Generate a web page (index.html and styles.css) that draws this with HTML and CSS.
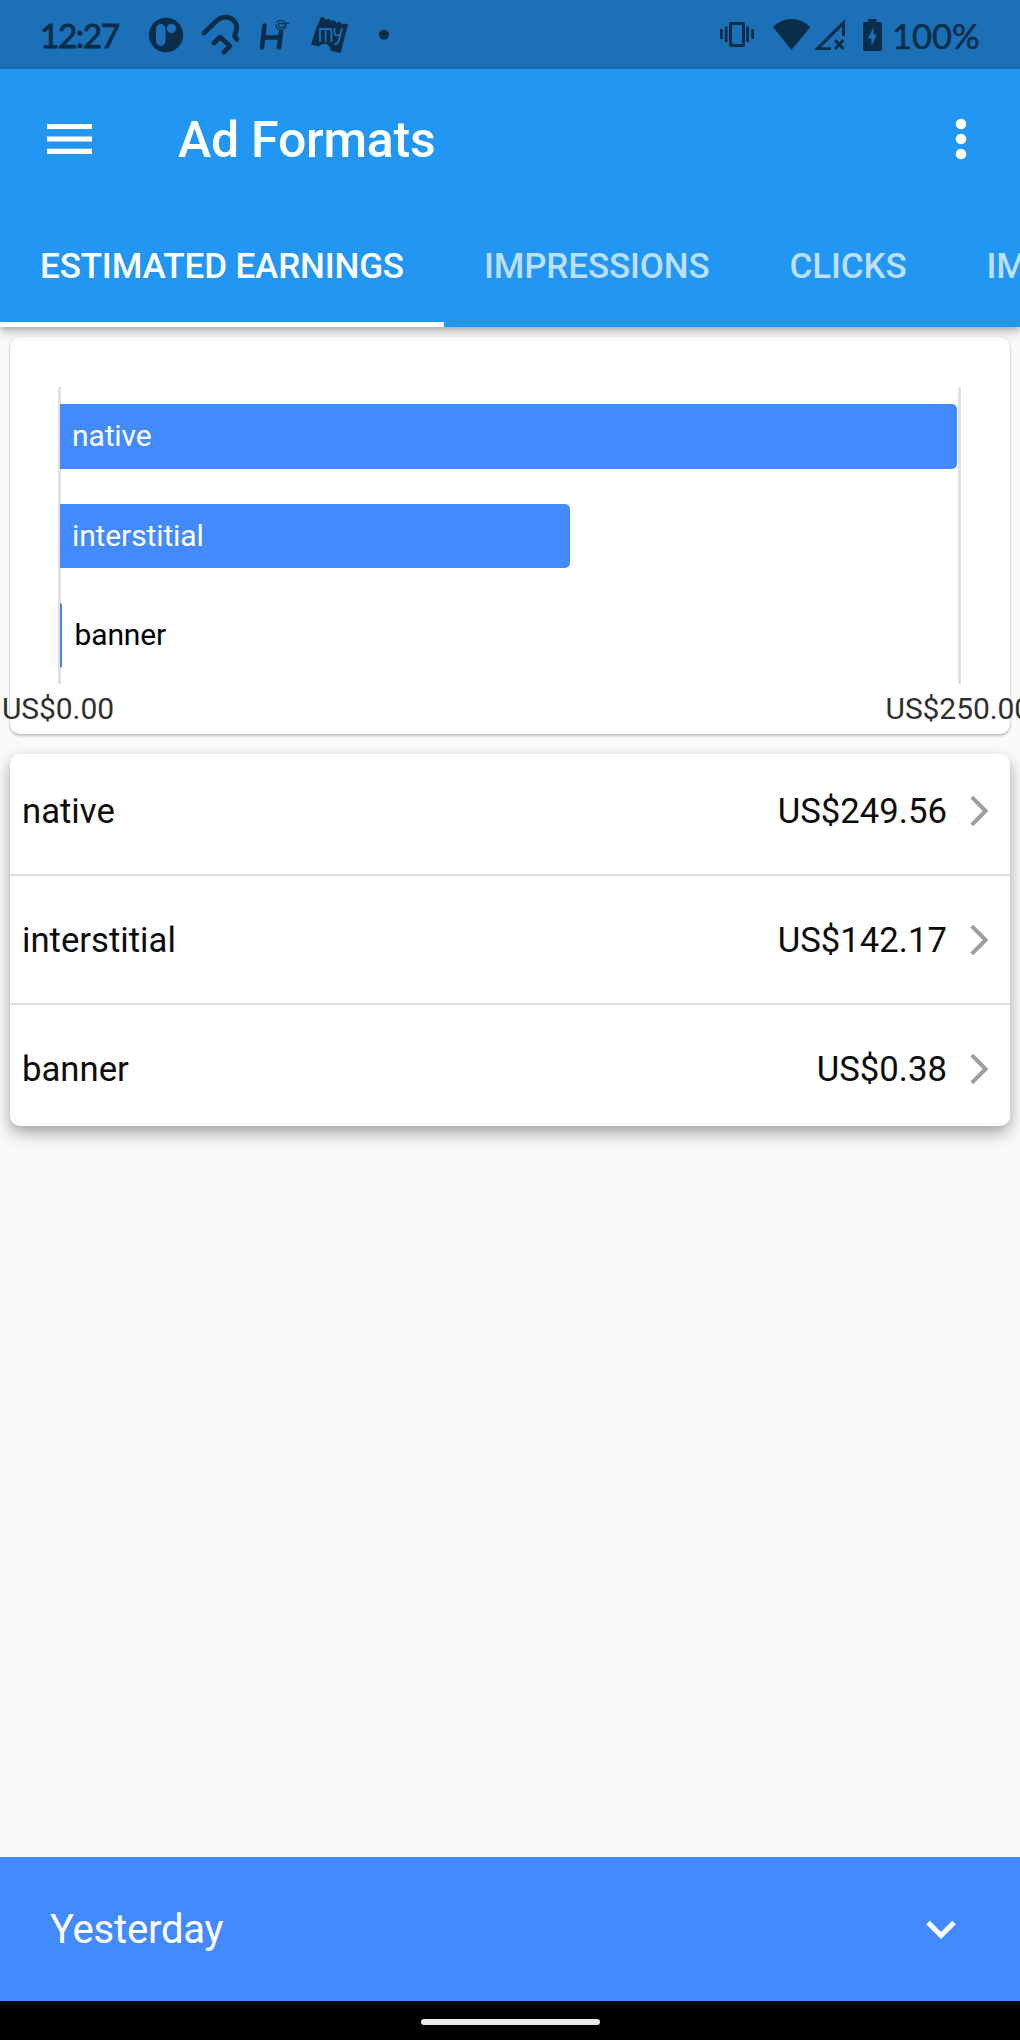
FILE: index.html
```html
<!DOCTYPE html>
<html lang="en">
<head>
<meta charset="utf-8">
<title>Ad Formats</title>
<link rel="stylesheet" href="styles.css">
</head>
<body>
<div class="screen">
  <div class="status">
    <span class="clock">12:27</span>
    <svg class="notifications" width="260" height="69" viewBox="140 0 260 69">
      <circle cx="166" cy="35" r="17.2" fill="#0a2e4a"/>
      <rect x="156" y="24" width="9.5" height="22" rx="4.7" fill="#1b70b8"/>
      <circle cx="171.500" cy="28.500" r="4.700" fill="#1b70b8"/>
      <path d="M204 33 L217 20.500 C223 15 231 16.500 235 22 C239 27 235.500 32.500 234.500 36 L237 39.500 M214 43 L220 37 L230 46 L224 52" fill="none" stroke="#0a2e4a" stroke-width="4.800" stroke-linecap="round" stroke-linejoin="round"/>
      <path d="M264.500 25.500 L262 47.500 M281 32 L279 47.500 M263 37.500 H280" fill="none" stroke="#0a2e4a" stroke-width="4.600" stroke-linecap="round"/>
      <path d="M285.500 23 L289 23.500" stroke="#0a2e4a" stroke-width="1"/>
      <path d="M276.500 22.500 C278 19.500 283 19.500 285 22.500 M276 24 C276 28 279 31 282 30 C286 28 287 25 285.500 22.500 M278.500 24 Q280 22 281.500 24 Q284 22.500 285 24.500 Q284 27 281 28 Q278.500 27 278.500 24" fill="none" stroke="#0a2e4a" stroke-width="1.200"/>
      <path d="M321 17 L324 17.500 L325.500 20 L329 18.500 L331 21 L334.500 20 L336.500 23 L340 21.500 L342 24.500 L344.500 23.500 L348 24.500 L340.500 53 L330.500 50.500 L330 47 L326 43.500 L321 44.500 L319 46.500 L311 44.500 L316 29 Z" fill="#0a2e4a"/>
      <path d="M320 42 V29 H329.500 Q331.500 29 331.500 32 V42 M325.700 29 V42 M334.500 28 V33 Q335 37 339.500 34.500 M342 28 L339 40 Q337.500 45 334 44" fill="none" stroke="#1b70b8" stroke-width="1.800"/>
      <circle cx="384" cy="34.700" r="5" fill="#0a2e4a"/>
    </svg>
    <svg class="system" width="168" height="69" viewBox="718 0 168 69">
      <g fill="#0a2e4a">
        <path fill-rule="evenodd" d="M731 22 H743 Q745 22 745 24 V45 Q745 47 743 47 H731 Q729 47 729 45 V24 Q729 22 731 22 Z M732 25 V44 H742 V25 Z"/>
        <path d="M720 29 h2.800 v10 h-2.800 z M724.800 26.500 h2.800 v15.500 h-2.800 z M746.200 26.500 h2.800 v15.500 h-2.800 z M751.200 29 h2.800 v10 h-2.800 z"/>
        <path d="M791.500 50 L773 27 Q781 19 791.500 19 Q802 19 810.300 27 Z"/>
        <path d="M814 50 L845 19 V36 H842 V26.500 L821 47.300 H831 V50 Z"/>
        <path d="M864.500 22 H868 V19 H876.500 V22 H880 Q882 22 882 24 V49 Q882 51 880 51 H865 Q863 51 863 49 V24 Q863 22 864.500 22 Z"/>
      </g>
      <path d="M835 40 L843.500 49 M843.500 40 L835 49" stroke="#0a2e4a" stroke-width="3"/>
      <path d="M873.500 27 L868 38.500 H871.500 V46 L877 34.500 H873.500 Z" fill="#1b70b8"/>
    </svg>
    <span class="battery">100%</span>
  </div>
  <header class="header">
    <div class="appbar">
      <svg width="46" height="32" viewBox="0 0 46 32"><path d="M0 3.500 H45 M0 16 H45 M0 28.300 H45" stroke="#fff" stroke-width="5.200"/></svg>
      <h1 class="title">Ad Formats</h1>
      <svg width="12" height="42" viewBox="0 0 12 42" fill="#fff"><circle cx="6" cy="6" r="5.300"/><circle cx="6" cy="21" r="5.300"/><circle cx="6" cy="36" r="5.300"/></svg>
    </div>
    <nav class="tabs">
      <span class="tab active">ESTIMATED EARNINGS</span>
      <span class="tab">IMPRESSIONS</span>
      <span class="tab">CLICKS</span>
      <span class="tab">IMPRESSION RPM</span>
    </nav>
  </header>
  <main class="content">
    <section class="card chart">
      <div class="plot">
        <div class="bar" style="width:897px">native</div>
        <div class="bar" style="width:510px">interstitial</div>
        <div class="bar tiny" style="width:2px">banner</div>
      </div>
      <div class="axis"><span>US$0.00</span><span>US$250.00</span></div>
    </section>
    <section class="card list">
      <div class="row"><span>native</span><span class="amount">US$249.56</span><svg class="chevron" width="20" height="32" viewBox="0 0 20 32"><path d="M1.800 2.200 L15.600 16 L1.800 29.800"/></svg></div>
      <div class="row"><span>interstitial</span><span class="amount">US$142.17</span><svg class="chevron" width="20" height="32" viewBox="0 0 20 32"><path d="M1.800 2.200 L15.600 16 L1.800 29.800"/></svg></div>
      <div class="row"><span>banner</span><span class="amount">US$0.38</span><svg class="chevron" width="20" height="32" viewBox="0 0 20 32"><path d="M1.800 2.200 L15.600 16 L1.800 29.800"/></svg></div>
    </section>
  </main>
  <footer class="period">
    <span>Yesterday</span>
    <svg width="30" height="20" viewBox="0 0 30 20"><path d="M2 2.500 L15 15.500 L28 2.500" fill="none" stroke="#fff" stroke-width="5"/></svg>
  </footer>
  <div class="navbar"><div class="handle"></div></div>
</div>
</body>
</html>
```
FILE: styles.css
```css
* { box-sizing: border-box; }
body { margin: 0; font-family: Roboto, sans-serif; background: #fafafa; }
.screen { width: 1020px; height: 2040px; display: flex; flex-direction: column; overflow: hidden; }
svg { display: block; flex: none; }

.status { height: 69px; flex: none; display: flex; align-items: center; background: #1b70b8; color: #0a2e4a; font-family: Lato, sans-serif; font-size: 33.500px; line-height: 69px; }
.clock { width: 100px; margin-left: 40px; letter-spacing: -1.500px; font-weight: 400; -webkit-text-stroke: 0.9px #0a2e4a; padding-top: 2px; }
.system { margin-left: auto; }
.battery { width: 134px; padding: 2px 0 0 6px; font-size: 34.500px; -webkit-text-stroke: 0.5px #0a2e4a; }

.header { height: 258px; flex: none; background: #2196f3; color: #fff; position: relative; z-index: 1; box-shadow: 0 5px 10px rgba(0,0,0,.24), 0 2px 5px rgba(0,0,0,.12); }
.appbar { height: 140px; display: flex; align-items: center; padding: 0 53px 0 47px; }
.title { flex: 1; margin: 0 0 0 85px; padding-top: 2px; font-size: 50px; letter-spacing: -0.220px; font-weight: 500; line-height: 60px; }
.tabs { display: flex; height: 118px; overflow: hidden; }
.tab { flex: none; padding: 0 40px; font-size: 35px; letter-spacing: -0.140px; font-weight: 500; line-height: 115px; color: #bcdffb; white-space: nowrap; }
.tab.active { color: #fff; box-shadow: inset 0 -5px #fff; }

.content { flex: 1; padding: 10px 10px 0; }
.card { background: #fff; border-radius: 10px; }
.chart { height: 397px; padding: 50px 0 0 48px; box-shadow: 0 2px 3px rgba(0,0,0,.24), 0 0 2px rgba(0,0,0,.1); }
.plot { width: 903px; height: 297px; border: solid #e0e0e0; border-width: 0 3px; padding-top: 17px; display: flex; flex-direction: column; gap: 35px; }
.bar { flex: none; height: 64.500px; margin-left: -1px; background: #448aff; border-radius: 0 5px 5px 0; color: #fff; font-size: 30px; letter-spacing: -0.120px; line-height: 63px; padding-left: 12px; white-space: nowrap; }
.tiny { color: #000; border-radius: 0 2px 2px 0; padding-left: 0; text-indent: 14.500px; }
.axis { display: flex; justify-content: space-between; margin: 7px 0 0 -56px; width: 1029px; font-size: 30px; letter-spacing: -0.100px; line-height: 36px; color: #303030; }

.list { margin-top: 20px; height: 372px; box-shadow: 0 8px 18px rgba(0,0,0,.24), 0 5px 12px rgba(0,0,0,.14); }
.row { height: 129px; display: flex; align-items: center; padding: 0 20px 0 12px; border-bottom: 2px solid #dcdcdc; font-size: 34.700px; color: #0c0c0c; }
.row:first-child { height: 122px; padding-bottom: 6px; }
.row:last-child { border: 0; height: 128px; }
.amount { margin-left: auto; margin-right: 23px; }
.chevron path { fill: none; stroke: #9e9e9e; stroke-width: 4; }

.period { height: 144px; flex: none; display: flex; align-items: center; justify-content: space-between; padding: 1px 64px 0 50px; background: #448aff; color: #fff; font-size: 40px; letter-spacing: -0.200px; }
.navbar { height: 39px; flex: none; background: #000; display: flex; justify-content: center; align-items: center; padding-top: 3px; }
.handle { width: 179px; height: 6px; border-radius: 3px; background: #e8e8e8; }
```
